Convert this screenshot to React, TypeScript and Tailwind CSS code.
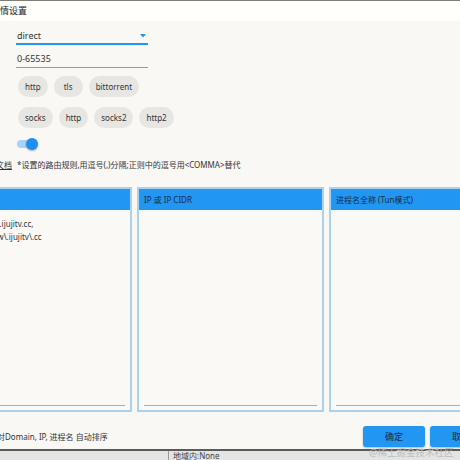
export default function App() {
  const chipsA = ["http", "tls", "bittorrent"];
  const chipsB = ["socks", "http", "socks2", "http2"];

  return (
    <div
      className="relative w-[460px] h-[460px] overflow-hidden bg-[#f9f8f5] text-[#333] flex flex-col"
      style={{ fontFamily: '"Noto Sans", "Noto Sans CJK SC", sans-serif' }}
    >
      {/* title bar */}
      <div className="h-[21px] shrink-0 border-t border-[#7f7f7a] bg-[#fffffc] text-[9px] leading-[19px] text-[#222]">
        情设置
      </div>

      {/* form */}
      <div className="pl-[16px] pt-[5px] flex flex-col">
        <div className="w-[132px] h-[19px] border-b-2 border-[#2196f3] flex items-center justify-between pl-[1px] pr-[1px] pt-[2px]">
          <span className="text-[9px] leading-none">direct</span>
          <svg width="6" height="4" viewBox="0 0 6 4" className="mr-[1px]">
            <path d="M0 0h6L3 3.5z" fill="#2196f3" />
          </svg>
        </div>
        <div className="w-[132px] h-[19px] mt-[4px] border-b border-[#9a9a9a] flex items-center pl-[1px]">
          <span className="text-[9px] leading-none">0-65535</span>
        </div>

        <div className="flex gap-[6px] pl-[2px] mt-[8px]">
          {chipsA.map((c) => (
            <span
              key={c}
              className="h-[21px] px-[7px] min-w-[29px] rounded-full bg-[#e7e6e3] text-[8px] leading-[21px] text-center"
            >
              {c}
            </span>
          ))}
        </div>
        <div className="flex gap-[6px] pl-[2px] mt-[10px]">
          {chipsB.map((c) => (
            <span
              key={c}
              className="h-[21px] px-[7px] min-w-[29px] rounded-full bg-[#e7e6e3] text-[8px] leading-[21px] text-center"
            >
              {c}
            </span>
          ))}
        </div>

        {/* switch */}
        <div className="relative mt-[9px] ml-[1px] w-[22px] h-[14px] flex items-center">
          <div className="w-[16px] h-[8px] rounded-full bg-[#a9d3f6]" />
          <div className="absolute left-[9px] top-[1px] w-[12px] h-[12px] rounded-full bg-[#1f8ff0] shadow-[0_1px_2px_rgba(0,0,0,0.3)]" />
        </div>
      </div>

      {/* hint line */}
      <div className="mt-[7px] h-[14px] flex items-center text-[8px] leading-[14px] whitespace-nowrap">
        <span className="ml-[-20px] underline">说明文档</span>
        <span className="ml-[5px]">*设置的路由规则,用逗号(,)分隔;正则中的逗号用&lt;COMMA&gt;替代</span>
      </div>

      {/* panels */}
      <div className="mt-[15px] ml-[-55px] flex gap-[5px] h-[225px] shrink-0">
        {[
          { title: "域名", lines: ["domain:www.ijujitv.cc,", "regexp:.*www\\.ijujitv\\.cc"] },
          { title: "IP 或 IP CIDR", lines: [] },
          { title: "进程名全称 (Tun模式)", lines: [] },
        ].map((p) => (
          <div
            key={p.title}
            className="w-[187px] shrink-0 border-2 border-[#acd1ec] bg-[#faf9f6] flex flex-col"
          >
            <div className="h-[21px] bg-[#2196f3] text-[8px] leading-[21px] pl-[5px] text-[#1d2b3a] whitespace-nowrap">
              {p.title}
            </div>
            <div className="flex-1 mx-[5px] mb-[4px] border-b border-[#94b3cc] pt-[7px] text-[8px] leading-[13px] whitespace-nowrap">
              {p.lines.map((l) => (
                <div key={l} className="ml-[-2px]">{l}</div>
              ))}
            </div>
          </div>
        ))}
      </div>

      {/* footer */}
      <div className="mt-[14px] flex items-center h-[21px] shrink-0">
        <span className="ml-[-27px] text-[8px] whitespace-nowrap">保存时对Domain, IP, 进程名 自动排序</span>
        <div className="ml-auto flex gap-[5px] mr-[-32px]">
          <button className="w-[62px] h-[21px] rounded-[3px] bg-[#2196f3] text-[9px] text-[#1d2b3a] shadow-[0_1px_2px_rgba(0,0,0,0.25)]">
            确定
          </button>
          <button className="w-[62px] h-[21px] rounded-[3px] bg-[#2196f3] text-[9px] text-[#1d2b3a] shadow-[0_1px_2px_rgba(0,0,0,0.25)]">
            取消
          </button>
        </div>
      </div>

      {/* window beneath */}
      <div className="mt-[2px] flex-1 border-t-2 border-[#5a5a58] bg-[#e4e4e2] flex">
        <div className="ml-[168px] pl-[4px] border-l border-[#9a9a9a] text-[8px] leading-[10px] text-[#444]">
          地域内:None
        </div>
      </div>

      {/* watermark */}
      <div className="absolute left-[369px] top-[446px] text-[9.5px] leading-[13px] text-[#bdbdbd] whitespace-nowrap">
        @稀土掘金技术社区
      </div>
    </div>
  );
}
